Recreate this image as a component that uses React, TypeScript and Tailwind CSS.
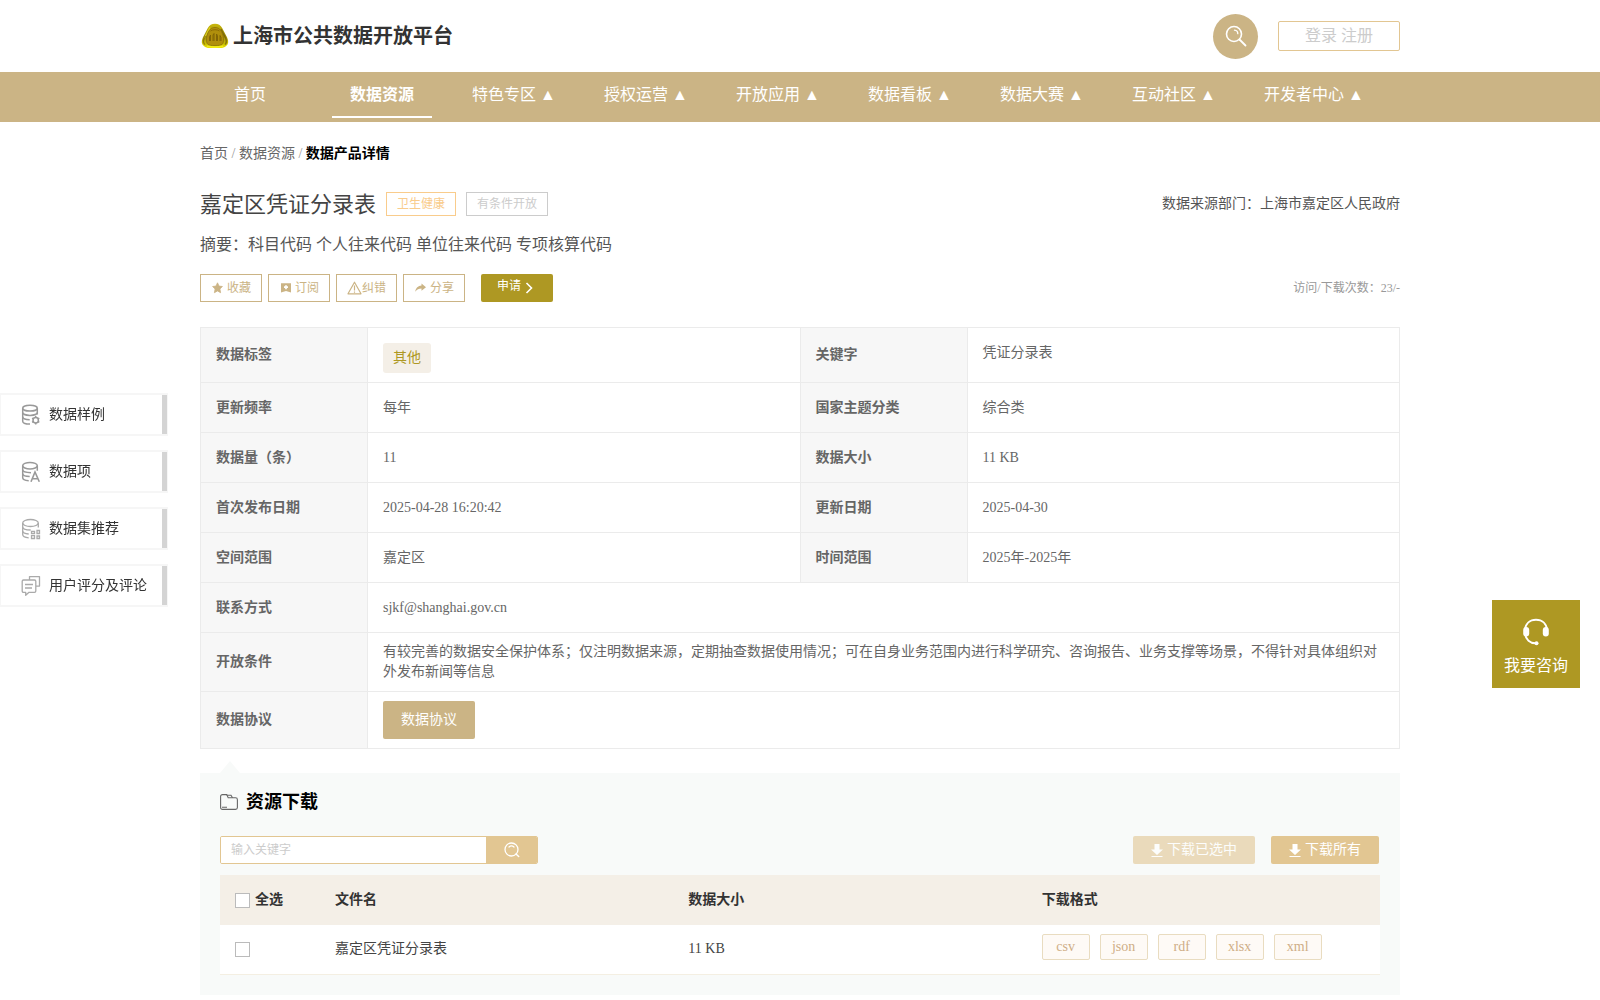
import { ReactNode, useState } from "react";

type InfoCell = {
  label: string;
  value: ReactNode;
};

const NAV_ITEMS = [
  { label: "首页", hasMenu: false, active: false },
  { label: "数据资源", hasMenu: false, active: true },
  { label: "特色专区", hasMenu: true, active: false },
  { label: "授权运营", hasMenu: true, active: false },
  { label: "开放应用", hasMenu: true, active: false },
  { label: "数据看板", hasMenu: true, active: false },
  { label: "数据大赛", hasMenu: true, active: false },
  { label: "互动社区", hasMenu: true, active: false },
  { label: "开发者中心", hasMenu: true, active: false },
];

const FORMATS = ["csv", "json", "rdf", "xlsx", "xml"];

const INFO_PAIRS: [InfoCell, InfoCell][] = [
  [
    { label: "更新频率", value: "每年" },
    { label: "国家主题分类", value: "综合类" },
  ],
  [
    { label: "数据量（条）", value: "11" },
    { label: "数据大小", value: "11 KB" },
  ],
  [
    { label: "首次发布日期", value: "2025-04-28 16:20:42" },
    { label: "更新日期", value: "2025-04-30" },
  ],
  [
    { label: "空间范围", value: "嘉定区" },
    { label: "时间范围", value: "2025年-2025年" },
  ],
];

function LogoIcon() {
  return (
    <svg width="28" height="26" viewBox="0 0 28 26" aria-hidden="true">
      <defs>
        <linearGradient id="logo-gold" x1="0" y1="0" x2="0" y2="1">
          <stop offset="0" stopColor="#c9b80c" />
          <stop offset="0.5" stopColor="#9c8a0a" />
          <stop offset="1" stopColor="#e8e000" />
        </linearGradient>
      </defs>
      <path
        d="M14 .8c3.400 0 5.600 1.500 7.300 4.400l4.800 9.300c1.800 3.800 1.400 6.600-1 8.600-1.600 1.400-3.300 2-6 2H8.900c-2.700 0-4.400-.6-6-2-2.400-2-2.800-4.800-1-8.600l4.800-9.300C8.400 2.300 10.600.8 14 .8z"
        fill="url(#logo-gold)"
      />
      <path d="M20 6l4.800 9.500c1 2.700.6 4.600-.8 6" fill="none" stroke="#6f5a0a" strokeWidth="1.500" opacity=".7" />
      <path d="M3.200 15c-1.200 3-.9 5.200.8 6.600" fill="none" stroke="#6f5a0a" strokeWidth="1.200" opacity=".6" />
      <path d="M9 4.500 4.500 13" stroke="#ebe022" strokeWidth="1.500" opacity=".8" />
      <path
        d="M14 4.500c4 0 6 2.500 7.500 6.500s1.500 9-.5 10.500-12 1.500-14 0S5 15 6.500 11 10 4.500 14 4.500z"
        fill="#b08f0c"
        stroke="#8a7008"
        strokeWidth=".8"
      />
      <path
        d="M8.500 18v-4l1-2v6M12 18v-6l1-1.500V18M15.500 18v-7l1 1.500V18M19 18v-5.500l1 2V18"
        fill="none"
        stroke="#7d6004"
        strokeWidth=".9"
      />
      <path d="M9.500 8C12 6.300 16 6.300 18.500 8" fill="none" stroke="#8a6a04" strokeWidth=".9" />
      <path d="M6 23.300c5 1 11 1 16 0" fill="none" stroke="#f2ee1a" strokeWidth="1.600" />
    </svg>
  );
}

function MagnifierIcon() {
  return (
    <svg width="22" height="22" viewBox="0 0 22 22" fill="none" stroke="#fff" strokeLinecap="round" aria-hidden="true">
      <circle cx="9" cy="9" r="7.500" strokeWidth="1.600" />
      <path d="m14.500 14.500 6 6" strokeWidth="1.800" />
      <path d="M9.500 5.200c2 .2 3.300 1.600 3.300 3.500" strokeWidth="1.300" />
    </svg>
  );
}

function TableSearchIcon() {
  return (
    <svg width="16" height="16" viewBox="0 0 16 16" fill="none" stroke="#fff" strokeLinecap="round" aria-hidden="true">
      <circle cx="7.500" cy="7.500" r="6.500" strokeWidth="1.300" />
      <path d="m12 12 2.700 2.500" strokeWidth="1.500" />
      <path d="M5 5c1.400-1.300 3.600-1.300 5 0" strokeWidth="1.200" />
    </svg>
  );
}

function StarIcon() {
  return (
    <svg width="12" height="12" viewBox="0 0 12 12" fill="#cbb485" aria-hidden="true">
      <path
        d="m6.500.8 1.500 3.300 3.400.4-2.500 2.500.7 3.700-3.100-1.800-3.100 1.800.7-3.700-2.500-2.500 3.400-.4z"
        stroke="#cbb485"
        strokeWidth=".8"
        strokeLinejoin="round"
      />
    </svg>
  );
}

function SubscribeIcon() {
  return (
    <svg width="12" height="12" viewBox="0 0 12 12" aria-hidden="true">
      <path d="M2 1.300h10v9.300L7 9.100l-5 1.500z" fill="#cbb485" />
      <path d="M7 3.200v4M5 5.200h4" stroke="#fff" strokeWidth="1.700" />
    </svg>
  );
}

function WarnIcon() {
  return (
    <svg width="15" height="14" viewBox="0 0 15 14" fill="none" stroke="#cbb485" aria-hidden="true">
      <path d="M7.500 1.200 14 12.800H1z" strokeWidth="1.200" strokeLinejoin="round" />
      <path d="M7.500 4.500v5M7.500 10.500v1.200" strokeWidth="1.200" />
    </svg>
  );
}

function ShareIcon() {
  return (
    <svg width="12" height="12" viewBox="0 0 12 12" fill="#cbb485" aria-hidden="true">
      <path d="M7.500 1.500 12 5.200 7.500 8.700V6.600C5 6.600 2.800 7.400 1.300 9.700 1.700 6.200 4 3.900 7.500 3.600z" />
    </svg>
  );
}

function DownloadIcon() {
  return (
    <svg width="12" height="14" viewBox="0 0 12 14" fill="#fff" aria-hidden="true">
      <path d="M3.500 1h5v5.500h3.500L6 12 0 6.500h3.500zM.5 13h11v1H.5z" />
    </svg>
  );
}

function FolderIcon() {
  return (
    <svg width="18" height="16" viewBox="0 0 18 16" fill="none" stroke="#666" aria-hidden="true">
      <path
        d="M2.500.6h4.200l1.500 3.200h7.300c1.100 0 1.900.8 1.900 1.900v7.800c0 1.100-.8 1.900-1.900 1.900h-13C1.400 15.400.6 14.600.6 13.500v-11C.6 1.400 1.400.6 2.500.6z"
        strokeWidth="1.100"
      />
      <path d="M6.700 1.300h4.300l1.500 2.500M2 13.200h5" strokeWidth="1.100" />
    </svg>
  );
}

function HeadsetIcon() {
  return (
    <svg width="28" height="28" viewBox="0 0 28 28" fill="none" aria-hidden="true">
      <path
        d="M3 12C3.500 5.500 8 1.800 14 1.800S24.500 5.500 25 12M3 16c1 5.500 5 9.300 10.500 9.300"
        stroke="#fff"
        strokeWidth="2"
      />
      <rect x="1.200" y="9" width="6" height="9.500" rx="3" fill="#fff" />
      <rect x="20.800" y="9" width="6" height="9.500" rx="3" fill="#fff" />
      <circle cx="14.500" cy="25.300" r="2" fill="#fff" />
    </svg>
  );
}

function SampleIcon() {
  return (
    <svg width="20" height="22" viewBox="0 0 20 22" fill="none" stroke="#999" strokeWidth="1.500" aria-hidden="true">
      <ellipse cx="9" cy="4.200" rx="7.300" ry="2.900" />
      <path d="M1.700 4.200v13c0 1.600 3 2.900 7.300 2.900M16.300 4.200v6.300" />
      <path d="M1.700 8.500c0 1.600 3.200 2.900 7.300 2.900s7.300-1.300 7.300-2.900M1.700 12.800c0 1.600 3 2.900 7 2.900" />
      <circle cx="14.700" cy="16.200" r="2.700" />
      <path d="M14.700 12v1.600M14.700 18.800v1.600M11.100 14.100l1.300.8M17 17.500l1.300.8M11.100 18.300l1.300-.8M17 14.900l1.300-.8" />
    </svg>
  );
}

function FieldIcon() {
  return (
    <svg width="20" height="22" viewBox="0 0 20 22" fill="none" stroke="#999" strokeWidth="1.500" aria-hidden="true">
      <ellipse cx="9" cy="4.700" rx="7.300" ry="3.200" />
      <path d="M1.700 4.700v12c0 1.500 2.500 2.800 6 3M16.300 4.700v5" />
      <path d="M1.700 8.800c0 1.600 3 2.800 8.300 2.900M1.700 12.800c0 1.600 3 2.700 7 2.800" />
      <path d="M10 20.800 14 11l4.300 9.800M11.500 17.800h5.200" strokeWidth="1.600" />
    </svg>
  );
}

function RecommendIcon() {
  return (
    <svg width="20" height="22" viewBox="0 0 20 22" fill="none" stroke="#aaa" strokeWidth="1.300" aria-hidden="true">
      <ellipse cx="9.500" cy="5" rx="7.800" ry="3.500" />
      <path d="M1.700 5v11.500c0 1.700 2.500 3 6 3.300M17.300 5v4.500" />
      <path d="M1.700 9c0 1.700 3.300 3 8 3M1.700 13c0 1.600 2.600 2.800 6 3" />
      <path d="M10.500 13.300h3v2h-3zM16 12.500h2.500v3H16zM10.500 17.500h3v3h-3zM16 18h2.500v2.500H16z" />
    </svg>
  );
}

function CommentIcon() {
  return (
    <svg width="20" height="22" viewBox="0 0 20 22" fill="none" stroke="#aaa" strokeWidth="1.300" strokeLinejoin="round" aria-hidden="true">
      <path d="M8.500 5V1.600h10v9.500H15" />
      <path d="M2.500 5h11c.8 0 1.300.5 1.300 1.300v9.700c0 .8-.5 1.300-1.300 1.300H8l-3.300 3v-3H2.500c-.8 0-1.300-.5-1.300-1.300V6.300c0-.8.5-1.300 1.300-1.300zM4 9.500h8M4 13h7" />
    </svg>
  );
}

const SIDE_LINKS = [
  { label: "数据样例", icon: <SampleIcon /> },
  { label: "数据项", icon: <FieldIcon /> },
  { label: "数据集推荐", icon: <RecommendIcon /> },
  { label: "用户评分及评论", icon: <CommentIcon /> },
];

const ACTIONS = [
  { label: "收藏", icon: <StarIcon />, spacing: "gap-1" },
  { label: "订阅", icon: <SubscribeIcon />, spacing: "gap-1" },
  { label: "纠错", icon: <WarnIcon />, spacing: "gap-0" },
  { label: "分享", icon: <ShareIcon />, spacing: "gap-1" },
];

const labelClass = "border border-[#ebebeb] bg-[#f7f7f7] px-[15px] text-left font-bold";
const valueClass = "border border-[#ebebeb] px-[15px]";
const checkboxClass = "size-[15px] shrink-0 appearance-none border border-[#bbb] bg-white checked:bg-[#cbb485]";

function Header() {
  return (
    <header className="mx-auto flex h-[72px] w-full max-w-[1200px] items-center justify-between">
      <a href="#" className="flex items-center gap-1 pl-px text-[20px] font-bold text-[#333]">
        <LogoIcon />
        上海市公共数据开放平台
      </a>
      <div className="flex items-center gap-5">
        <button
          type="button"
          aria-label="搜索"
          className="flex size-[45px] items-center justify-center rounded-full bg-[#cbb485]"
        >
          <MagnifierIcon />
        </button>
        <div className="flex h-[30px] w-[122px] items-center justify-center gap-1 rounded-[2px] border border-[#e2c692] text-base text-[#ccc]">
          <a href="#">登录</a>
          <a href="#">注册</a>
        </div>
      </div>
    </header>
  );
}

function MainNav() {
  return (
    <nav className="h-[50px] bg-[#cbb485]">
      <div className="mx-auto flex w-full max-w-[1200px] gap-8">
        {NAV_ITEMS.map((item) => (
          <a
            key={item.label}
            href="#"
            className={`min-w-[100px] border-b-2 px-2 pt-[2px] text-center text-base leading-[42px] whitespace-nowrap text-white ${
              item.active ? "border-white font-bold" : "border-transparent"
            }`}
          >
            {item.label}
            {item.hasMenu ? " ▲" : null}
          </a>
        ))}
      </div>
    </nav>
  );
}

function ProductSummary() {
  return (
    <section>
      <div className="mt-[22px] flex h-9 items-center">
        <h1 className="text-[22px] text-[#444]">嘉定区凭证分录表</h1>
        <span className="ml-[10px] border border-[#f9cc8c] px-[10px] text-xs leading-[22px] text-[#f9cc8c]">卫生健康</span>
        <span className="ml-[10px] border border-[#ccc] px-[10px] text-xs leading-[22px] text-[#ccc]">有条件开放</span>
        <p className="ml-auto text-sm text-[#555]">数据来源部门：上海市嘉定区人民政府</p>
      </div>
      <p className="mt-[11px] text-base leading-6 text-[#555]">摘要：科目代码 个人往来代码 单位往来代码 专项核算代码</p>
      <div className="mt-[17px] flex items-center gap-[6px]">
        {ACTIONS.map((action) => (
          <button
            key={action.label}
            type="button"
            className={`flex h-7 items-center border border-[#cbb485] px-[10px] text-xs text-[#cbb485] ${action.spacing}`}
          >
            {action.icon}
            {action.label}
          </button>
        ))}
        <button
          type="button"
          className="ml-[10px] flex h-7 w-[72px] items-center gap-1 rounded-[2px] bg-[#ae9823] pb-1 pl-4 text-xs text-white"
        >
          申请
          <svg width="8" height="12" viewBox="0 0 8 12" className="mt-1" fill="none" stroke="#fff" strokeWidth="1.600" aria-hidden="true">
            <path d="m1.500 1 5 5-5 5" />
          </svg>
        </button>
        <p className="ml-auto text-xs text-[#999]">访问/下载次数：23/-</p>
      </div>
    </section>
  );
}

function InfoTable() {
  return (
    <table className="mt-[25px] w-full table-fixed border-collapse text-sm leading-5 text-[#666]">
      <colgroup>
        <col className="w-[167px]" />
        <col />
        <col className="w-[167px]" />
        <col />
      </colgroup>
      <tbody>
        <tr className="h-[55px]">
          <th className={labelClass}>数据标签</th>
          <td className={valueClass}>
            <span className="mt-[5px] inline-block rounded-[3px] bg-[#f4efe7] px-[10px] leading-[30px] text-[#ae9823]">其他</span>
          </td>
          <th className={labelClass}>关键字</th>
          <td className={`pb-1 ${valueClass}`}>凭证分录表</td>
        </tr>
        {INFO_PAIRS.map(([left, right]) => (
          <tr key={left.label} className="h-[50px]">
            <th className={labelClass}>{left.label}</th>
            <td className={valueClass}>{left.value}</td>
            <th className={labelClass}>{right.label}</th>
            <td className={valueClass}>{right.value}</td>
          </tr>
        ))}
        <tr className="h-[50px]">
          <th className={labelClass}>联系方式</th>
          <td className={valueClass} colSpan={3}>
            sjkf@shanghai.gov.cn
          </td>
        </tr>
        <tr className="h-[59px]">
          <th className={labelClass}>开放条件</th>
          <td className={valueClass} colSpan={3}>
            有较完善的数据安全保护体系；仅注明数据来源，定期抽查数据使用情况；可在自身业务范围内进行科学研究、咨询报告、业务支撑等场景，不得针对具体组织对外发布新闻等信息
          </td>
        </tr>
        <tr className="h-[57px]">
          <th className={labelClass}>数据协议</th>
          <td className={valueClass} colSpan={3}>
            <button type="button" className="block h-[38px] rounded-[2px] bg-[#cbb485] px-[18px] text-white">
              数据协议
            </button>
          </td>
        </tr>
      </tbody>
    </table>
  );
}

function DownloadPanel() {
  const [keyword, setKeyword] = useState("");
  const [selected, setSelected] = useState(false);

  return (
    <section className="mt-3">
      <svg width="20" height="12" viewBox="0 0 20 12" className="ml-5 block" aria-hidden="true">
        <path d="M10 0 20 12H0z" fill="#f8faf9" />
      </svg>
      <div className="bg-[#f8faf9] px-5 pt-[14px] pb-5">
        <h2 className="flex h-[30px] items-center gap-2 text-lg font-bold text-black">
          <FolderIcon />
          资源下载
        </h2>

        <div className="mt-[19px] flex items-center">
          <form
            className="flex h-7 w-[318px] overflow-hidden rounded-[2px] border border-[#e2c692]"
            onSubmit={(event) => event.preventDefault()}
          >
            <input
              type="text"
              aria-label="输入关键字"
              placeholder="输入关键字"
              value={keyword}
              onChange={(event) => setKeyword(event.target.value)}
              className="min-w-0 flex-1 bg-white px-[10px] text-xs outline-none placeholder:text-[#ccc]"
            />
            <button type="submit" aria-label="查询" className="flex w-[51px] items-center justify-center bg-[#e2c692]">
              <TableSearchIcon />
            </button>
          </form>
          <div className="ml-auto flex gap-4 pr-px text-sm text-white">
            <button
              type="button"
              disabled={!selected}
              className="flex h-7 items-center gap-1 rounded-[2px] bg-[#e2c692] px-[18px] disabled:opacity-60"
            >
              <DownloadIcon />
              下载已选中
            </button>
            <button type="button" className="flex h-7 items-center gap-1 rounded-[2px] bg-[#e2c692] px-[18px]">
              <DownloadIcon />
              下载所有
            </button>
          </div>
        </div>

        <table className="mt-[11px] w-full table-fixed border-collapse text-sm text-[#444]">
          <colgroup>
            <col className="w-[100px]" />
            <col />
            <col />
            <col />
          </colgroup>
          <thead>
            <tr className="h-[50px] bg-[#f4efe7] text-left text-[#333]">
              <th className="px-[15px]">
                <label className="flex items-center gap-[5px]">
                  <input
                    type="checkbox"
                    checked={selected}
                    onChange={(event) => setSelected(event.target.checked)}
                    className={checkboxClass}
                  />
                  全选
                </label>
              </th>
              <th className="px-[15px]">文件名</th>
              <th className="px-[15px]">数据大小</th>
              <th className="px-[15px]">下载格式</th>
            </tr>
          </thead>
          <tbody>
            <tr className="h-[49px] border-b border-[#f4efe2] bg-white">
              <td className="px-[15px]">
                <input
                  type="checkbox"
                  aria-label="嘉定区凭证分录表"
                  checked={selected}
                  onChange={(event) => setSelected(event.target.checked)}
                  className={`block ${checkboxClass}`}
                />
              </td>
              <td className="px-[15px]">嘉定区凭证分录表</td>
              <td className="px-[15px]">11 KB</td>
              <td className="px-[15px] pb-1">
                <div className="flex gap-[10px]">
                  {FORMATS.map((format) => (
                    <button
                      key={format}
                      type="button"
                      className="h-[26px] w-12 rounded-[2px] border border-[#e9dcc0] bg-[#fefaf6] text-[#cfae86]"
                    >
                      {format}
                    </button>
                  ))}
                </div>
              </td>
            </tr>
          </tbody>
        </table>
      </div>
    </section>
  );
}

export default function App() {
  return (
    <div className="bg-white font-['Liberation_Serif','Noto_Sans_CJK_SC',serif]">
      <Header />
      <MainNav />
      <main className="mx-auto w-full max-w-[1200px]">
        <nav aria-label="面包屑" className="pt-[22px] text-sm leading-5 text-[#666]">
          <a href="#">首页</a>
          <span className="text-[#999]"> / </span>
          <a href="#">数据资源</a>
          <span className="text-[#999]"> / </span>
          <span className="font-bold text-black">数据产品详情</span>
        </nav>
        <ProductSummary />
        <InfoTable />
        <DownloadPanel />
      </main>

      <aside className="fixed top-[393px] left-0 flex w-[168px] flex-col gap-[14px]">
        {SIDE_LINKS.map((link) => (
          <a
            key={link.label}
            href="#"
            className="flex h-[43px] items-center gap-[8px] border border-y-2 border-[#f6f6f6] bg-white pl-5 text-sm whitespace-nowrap text-[#333]"
          >
            {link.icon}
            {link.label}
            <span className="ml-auto h-full w-[5px] bg-[#d4d4d4]" />
          </a>
        ))}
      </aside>

      <button
        type="button"
        className="fixed top-[600px] right-5 flex size-[88px] flex-col items-center justify-center gap-2 bg-[#ae9823] pt-2 text-base text-white"
      >
        <HeadsetIcon />
        我要咨询
      </button>
    </div>
  );
}
